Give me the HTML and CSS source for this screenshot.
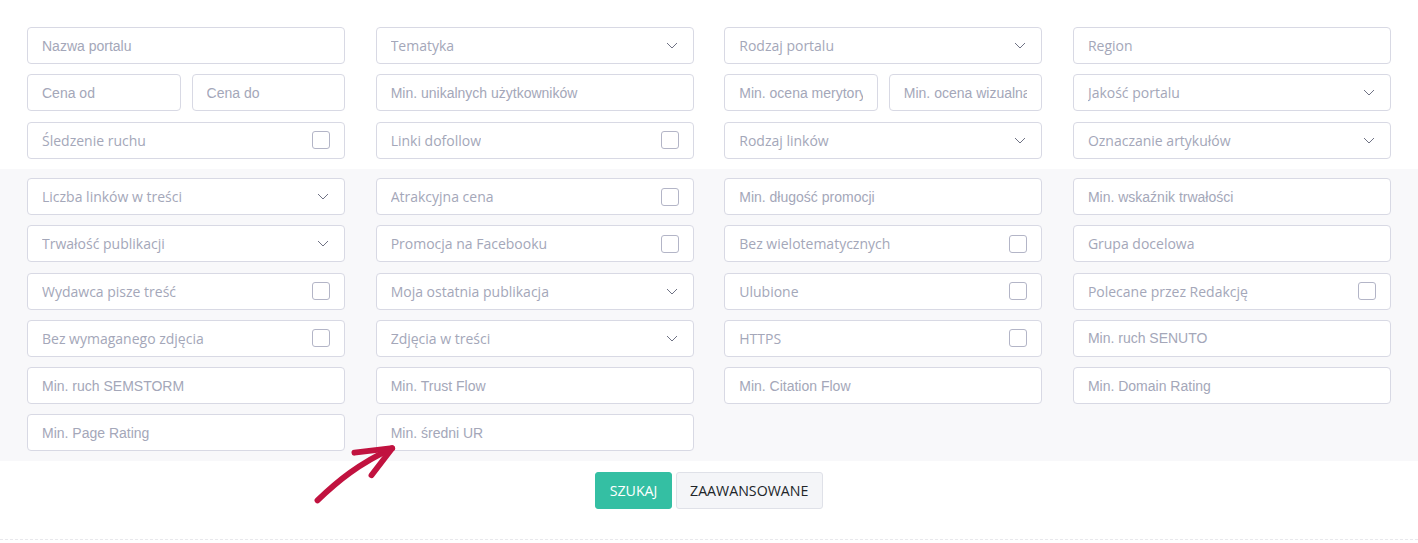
FILE: index.html
```html
<!DOCTYPE html>
<html lang="pl">
<head>
    <meta charset="UTF-8">
    <meta name="viewport" content="width=device-width, initial-scale=1.0">
    <title>Wyszukiwarka portali</title>
    <link rel="stylesheet" href="styles.css">
</head>
<body>

    <form class="search">
        <div class="grid top">
            <input class="field text" type="text" placeholder="Nazwa portalu">
            <div class="field select"><span>Tematyka</span><svg class="chev" viewBox="0 0 12 7"><path d="M1 1l5 5 5-5"/></svg></div>
            <div class="field select"><span>Rodzaj portalu</span><svg class="chev" viewBox="0 0 12 7"><path d="M1 1l5 5 5-5"/></svg></div>
            <input class="field text os" type="text" placeholder="Region">

            <div class="pair">
                <input class="field text" type="text" placeholder="Cena od">
                <input class="field text" type="text" placeholder="Cena do">
            </div>
            <input class="field text" type="text" placeholder="Min. unikalnych użytkowników">
            <div class="pair">
                <input class="field text" type="text" placeholder="Min. ocena merytoryczna">
                <input class="field text" type="text" placeholder="Min. ocena wizualna">
            </div>
            <div class="field select"><span>Jakość portalu</span><svg class="chev" viewBox="0 0 12 7"><path d="M1 1l5 5 5-5"/></svg></div>

            <label class="field check"><span>Śledzenie ruchu</span><i class="box"></i></label>
            <label class="field check"><span>Linki dofollow</span><i class="box"></i></label>
            <div class="field select"><span>Rodzaj linków</span><svg class="chev" viewBox="0 0 12 7"><path d="M1 1l5 5 5-5"/></svg></div>
            <div class="field select"><span>Oznaczanie artykułów</span><svg class="chev" viewBox="0 0 12 7"><path d="M1 1l5 5 5-5"/></svg></div>
        </div>

        <div class="band">
            <div class="grid">
                <div class="field select"><span>Liczba linków w treści</span><svg class="chev" viewBox="0 0 12 7"><path d="M1 1l5 5 5-5"/></svg></div>
                <label class="field check"><span>Atrakcyjna cena</span><i class="box"></i></label>
                <input class="field text" type="text" placeholder="Min. długość promocji">
                <input class="field text" type="text" placeholder="Min. wskaźnik trwałości">

                <div class="field select"><span>Trwałość publikacji</span><svg class="chev" viewBox="0 0 12 7"><path d="M1 1l5 5 5-5"/></svg></div>
                <label class="field check"><span>Promocja na Facebooku</span><i class="box"></i></label>
                <label class="field check"><span>Bez wielotematycznych</span><i class="box"></i></label>
                <input class="field text os" type="text" placeholder="Grupa docelowa">

                <label class="field check"><span>Wydawca pisze treść</span><i class="box"></i></label>
                <div class="field select"><span>Moja ostatnia publikacja</span><svg class="chev" viewBox="0 0 12 7"><path d="M1 1l5 5 5-5"/></svg></div>
                <label class="field check"><span>Ulubione</span><i class="box"></i></label>
                <label class="field check"><span>Polecane przez Redakcję</span><i class="box"></i></label>

                <label class="field check"><span>Bez wymaganego zdjęcia</span><i class="box"></i></label>
                <div class="field select"><span>Zdjęcia w treści</span><svg class="chev" viewBox="0 0 12 7"><path d="M1 1l5 5 5-5"/></svg></div>
                <label class="field check"><span>HTTPS</span><i class="box"></i></label>
                <input class="field text" type="text" placeholder="Min. ruch SENUTO">

                <input class="field text" type="text" placeholder="Min. ruch SEMSTORM">
                <input class="field text" type="text" placeholder="Min. Trust Flow">
                <input class="field text" type="text" placeholder="Min. Citation Flow">
                <input class="field text" type="text" placeholder="Min. Domain Rating">

                <input class="field text" type="text" placeholder="Min. Page Rating">
                <input class="field text" type="text" placeholder="Min. średni UR">
            </div>
        </div>

        <div class="actions">
            <button type="button" class="btn btn-success">Szukaj</button>
            <button type="button" class="btn btn-secondary">Zaawansowane</button>
        </div>

        <!-- strzałka wskazująca nowe pole -->
        <svg class="arrow" viewBox="0 0 100 70">
            <path d="M5 66 C 28 44, 50 26, 88 8"/>
            <path d="M46 13 L 88 8 L 65 38"/>
        </svg>
    </form>

    <div class="divider"></div>

</body>
</html>
```

FILE: styles.css
```css
body {
    margin: 0;
    padding: 0;
    background-color: #fff;
    font-family: "Open Sans", "Liberation Sans", sans-serif;
    font-size: 14px;
    color: #575962;
}

.search {
    position: relative;
    margin: 0;
}

/* siatka filtrów */
.grid {
    display: grid;
    grid-template-columns: repeat(4, 1fr);
    column-gap: 30.5px;
    row-gap: 10.2px;
    padding: 0 27px;
}

.grid.top {
    padding-top: 27px;
    padding-bottom: 10px;
    row-gap: 10.4px;
}

.band {
    background-color: #f8f8fa;
    padding: 9.5px 0 10px;
}

.pair {
    display: grid;
    grid-template-columns: 1fr 1fr;
    gap: 11px;
}

.field {
    box-sizing: border-box;
    height: 37px;
    width: 100%;
    min-width: 0;
    border: 1px solid #d8d9e4;
    border-radius: 4px;
    background-color: #fff;
    padding: 0 14px;
    display: flex;
    align-items: center;
    justify-content: space-between;
    color: #a4a7b9;
    font-size: 14px;
    margin: 0;
}

.field span {
    white-space: nowrap;
    overflow: hidden;
}

/* zwykłe pola tekstowe */
.text {
    display: block;
    font-family: "Liberation Sans", Arial, sans-serif;
    font-size: 14px;
    outline: none;
    color: #575962;
}

.text::placeholder {
    color: #a4a7b9;
    opacity: 1;
}

.text.os {
    font-family: "Open Sans", sans-serif;
}

.chev {
    width: 12px;
    height: 7px;
    flex: none;
    margin-right: 1px;
}

.chev path {
    fill: none;
    stroke: #6f7284;
    stroke-width: 1;
}

.box {
    flex: none;
    width: 16px;
    height: 16px;
    border: 1px solid #b3b5c7;
    border-radius: 3px;
    background-color: #fff;
}

/* przyciski */
.actions {
    text-align: center;
    padding-top: 11px;
}

.btn {
    font-family: "Open Sans", sans-serif;
    font-size: 14.2px;
    text-transform: uppercase;
    height: 37px;
    padding: 0 13.5px;
    border-radius: 3px;
    cursor: pointer;
    vertical-align: top;
}

.btn-success {
    background-color: #34bfa3;
    border: 1px solid #34bfa3;
    color: #fff;
}

.btn-secondary {
    background-color: #f4f5f8;
    border: 1px solid #dfe1e8;
    color: #212529;
}

.arrow {
    position: absolute;
    left: 313px;
    top: 441px;
    width: 90px;
    height: 63px;
    overflow: visible;
}

.arrow path {
    fill: none;
    stroke: #c1123f;
    stroke-width: 6.5;
    stroke-linecap: round;
    stroke-linejoin: round;
}

.divider {
    margin-top: 30px;
    border-top: 1px dashed #e8e8ec;
}
```
